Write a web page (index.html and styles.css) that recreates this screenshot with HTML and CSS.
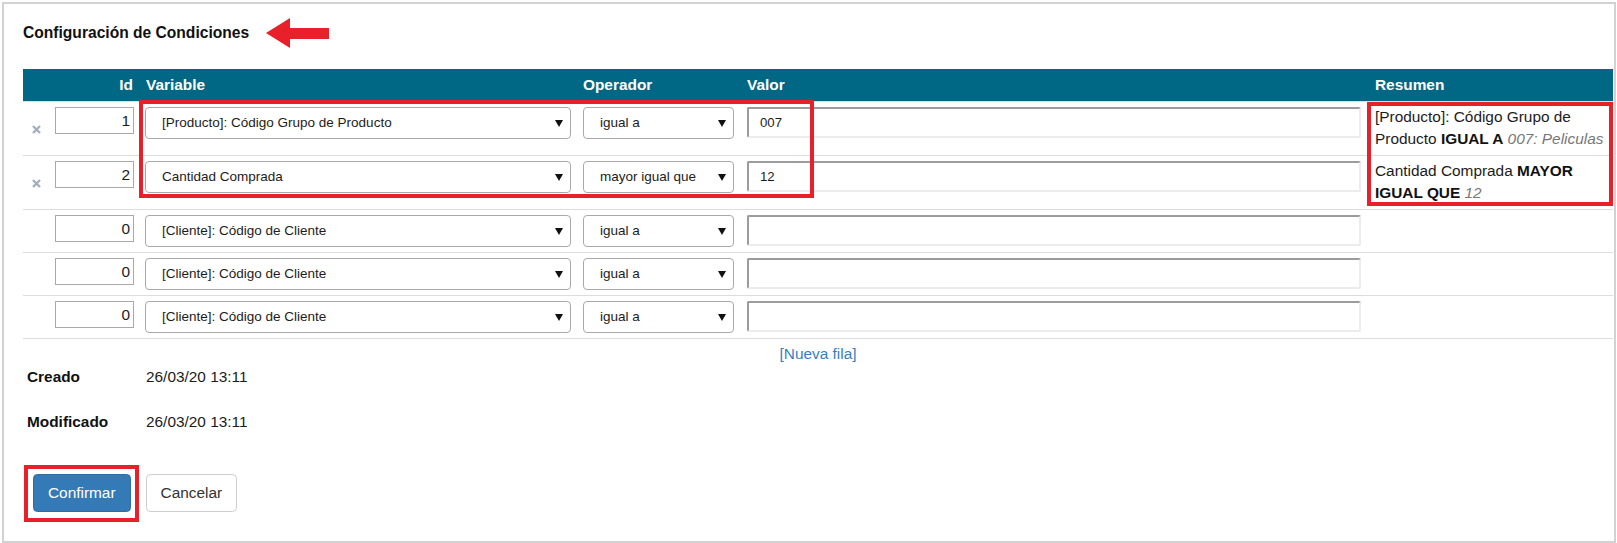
FILE: index.html
```html
<!DOCTYPE html>
<html lang="es">
<head>
<meta charset="utf-8">
<title>Configuración de Condiciones</title>
<link rel="stylesheet" href="styles.css">
</head>
<body>
<div class="frame">
  <h2 class="title">Configuración de Condiciones</h2>

  <table class="grid">
    <colgroup>
      <col class="c-del"><col class="c-id"><col class="c-var"><col class="c-op"><col class="c-val"><col class="c-res">
    </colgroup>
    <thead>
      <tr>
        <th class="del"></th>
        <th class="id">Id</th>
        <th class="var">Variable</th>
        <th class="op">Operador</th>
        <th class="val">Valor</th>
        <th class="res">Resumen</th>
      </tr>
    </thead>
    <tbody>
      <tr>
        <td class="del"><svg class="x" viewBox="0 0 9 9" width="9" height="9"><path d="M1 1L8 8M8 1L1 8"/></svg></td>
        <td class="id"><input class="idin" value="1"></td>
        <td class="var"><div class="sel"><span>[Producto]: Código Grupo de Producto</span><svg class="caret" viewBox="0 0 8 7" width="8" height="7"><polygon points="0,0 8,0 4,7"/></svg></div></td>
        <td class="op"><div class="sel"><span>igual a</span><svg class="caret" viewBox="0 0 8 7" width="8" height="7"><polygon points="0,0 8,0 4,7"/></svg></div></td>
        <td class="val"><input class="valin" value="007"></td>
        <td class="res">[Producto]: Código Grupo de Producto <b>IGUAL A</b> <i>007: Peliculas</i></td>
      </tr>
      <tr>
        <td class="del"><svg class="x" viewBox="0 0 9 9" width="9" height="9"><path d="M1 1L8 8M8 1L1 8"/></svg></td>
        <td class="id"><input class="idin" value="2"></td>
        <td class="var"><div class="sel"><span>Cantidad Comprada</span><svg class="caret" viewBox="0 0 8 7" width="8" height="7"><polygon points="0,0 8,0 4,7"/></svg></div></td>
        <td class="op"><div class="sel"><span>mayor igual que</span><svg class="caret" viewBox="0 0 8 7" width="8" height="7"><polygon points="0,0 8,0 4,7"/></svg></div></td>
        <td class="val"><input class="valin" value="12"></td>
        <td class="res">Cantidad Comprada <b>MAYOR IGUAL QUE</b> <i>12</i></td>
      </tr>
      <tr>
        <td class="del"></td>
        <td class="id"><input class="idin" value="0"></td>
        <td class="var"><div class="sel"><span>[Cliente]: Código de Cliente</span><svg class="caret" viewBox="0 0 8 7" width="8" height="7"><polygon points="0,0 8,0 4,7"/></svg></div></td>
        <td class="op"><div class="sel"><span>igual a</span><svg class="caret" viewBox="0 0 8 7" width="8" height="7"><polygon points="0,0 8,0 4,7"/></svg></div></td>
        <td class="val"><input class="valin" value=""></td>
        <td class="res"></td>
      </tr>
      <tr>
        <td class="del"></td>
        <td class="id"><input class="idin" value="0"></td>
        <td class="var"><div class="sel"><span>[Cliente]: Código de Cliente</span><svg class="caret" viewBox="0 0 8 7" width="8" height="7"><polygon points="0,0 8,0 4,7"/></svg></div></td>
        <td class="op"><div class="sel"><span>igual a</span><svg class="caret" viewBox="0 0 8 7" width="8" height="7"><polygon points="0,0 8,0 4,7"/></svg></div></td>
        <td class="val"><input class="valin" value=""></td>
        <td class="res"></td>
      </tr>
      <tr>
        <td class="del"></td>
        <td class="id"><input class="idin" value="0"></td>
        <td class="var"><div class="sel"><span>[Cliente]: Código de Cliente</span><svg class="caret" viewBox="0 0 8 7" width="8" height="7"><polygon points="0,0 8,0 4,7"/></svg></div></td>
        <td class="op"><div class="sel"><span>igual a</span><svg class="caret" viewBox="0 0 8 7" width="8" height="7"><polygon points="0,0 8,0 4,7"/></svg></div></td>
        <td class="val"><input class="valin" value=""></td>
        <td class="res"></td>
      </tr>
    </tbody>
    <tfoot>
      <tr><td colspan="6" class="foot"><a class="newrow" href="#">[Nueva fila]</a></td></tr>
    </tfoot>
  </table>

  <div class="meta">
    <div class="lbl">Creado</div><div class="v">26/03/20 13:11</div>
    <div class="lbl">Modificado</div><div class="v">26/03/20 13:11</div>
  </div>

  <div class="actions">
    <button class="btn btn-primary">Confirmar</button>
    <button class="btn btn-default">Cancelar</button>
  </div>

  <svg class="arrow" viewBox="0 0 63 30" width="63" height="30"><polygon points="0,15 24,0 24,10 63,10 63,21 24,21 24,30"/></svg>
  <div class="mark mark-a"></div>
  <div class="mark mark-b"></div>
  <div class="mark mark-c"></div>
</div>
</body>
</html>
```

FILE: styles.css
```css
html, body {
  margin: 0;
  padding: 0;
  background: #ffffff;
}

body {
  font-family: "Liberation Sans", Arial, sans-serif;
  font-size: 15.4px;
  line-height: 22px;
  color: #1c1c1c;
}

.frame {
  position: relative;
  box-sizing: border-box;
  margin: 2px 0 0 2px;
  width: 1614px;
  height: 541px;
  border: 2px solid #d2d2d2;
  padding: 18px 0 0 19px;
}

.title {
  margin: 0 0 25px;
  font-size: 15.6px;
  line-height: 22px;
  font-weight: bold;
  color: #111;
}

.grid {
  width: 1590px;
  table-layout: fixed;
  border-collapse: collapse;
  border-spacing: 0;
}

.c-del { width: 27px; }
.c-id { width: 89px; }
.c-var { width: 438px; }
.c-op { width: 163px; }
.c-val { width: 627px; }
.c-res { width: 246px; }

.grid th {
  background: #006885;
  color: #ffffff;
  font-weight: bold;
  text-align: left;
  padding: 5px 6px;
  line-height: 22px;
}

.grid th.id { text-align: right; padding-right: 6px; }

.grid td {
  border-top: 1px solid #dddddd;
  padding: 5px 6px;
  vertical-align: top;
}

.grid th.del, .grid td.del { padding: 0; text-align: center; vertical-align: middle; }
.grid th.var, .grid td.var { padding-left: 6px; padding-right: 6px; }
.grid th.var { padding-left: 7px; }
.grid td.id { padding-left: 5px; padding-right: 5px; }
.grid th.val, .grid td.val { padding-left: 7px; padding-right: 6px; }
.grid th.res, .grid td.res { padding-left: 8px; padding-right: 4px; }

.grid td.res {
  padding-top: 4px;
  padding-bottom: 5px;
  line-height: 22px;
  color: #1c1c1c;
}

.grid td.res b { font-weight: bold; color: #111; }
.grid td.res i { font-style: italic; color: #777777; }

.x {
  display: block;
  margin: 0 auto;
  position: relative;
  top: 1px;
  left: 0;
}
.x path {
  stroke: #a3acc1;
  stroke-width: 2.3;
  fill: none;
}

.idin {
  display: block;
  box-sizing: border-box;
  width: 79px;
  height: 27px;
  margin: 0;
  border: 1px solid #a9a9a9;
  border-radius: 0;
  padding: 0 3px;
  font-family: "Liberation Sans", Arial, sans-serif;
  font-size: 15.4px;
  color: #1c1c1c;
  text-align: right;
  background: #fff;
  outline: none;
}

.sel {
  display: flex;
  align-items: center;
  justify-content: space-between;
  box-sizing: border-box;
  width: 100%;
  height: 32px;
  border: 1px solid #a9a9a9;
  border-radius: 4px;
  padding: 0 7px 0 16px;
  font-size: 13.5px;
  color: #1c1c1c;
  background: #fff;
  white-space: nowrap;
  overflow: hidden;
}

.caret {
  flex: none;
  display: block;
}
.caret polygon { fill: #111; }

.valin {
  display: block;
  box-sizing: border-box;
  width: 100%;
  height: 31px;
  margin: 0;
  border-style: solid;
  border-width: 2px;
  border-color: #9c9c9c #ececec #ececec #9c9c9c;
  border-radius: 2px;
  padding: 0 11px;
  font-family: "Liberation Sans", Arial, sans-serif;
  font-size: 13.2px;
  color: #1c1c1c;
  background: #fff;
  outline: none;
}

.grid td.foot {
  text-align: center;
  padding: 4px 0 0;
  line-height: 22px;
}

.newrow {
  color: #3581c1;
  text-decoration: none;
}

.meta {
  display: grid;
  grid-template-columns: 119px auto;
  row-gap: 23px;
  margin-top: 1px;
  padding-left: 4px;
  line-height: 22px;
}

.meta .lbl { font-weight: bold; color: #111; }
.meta .v { color: #1c1c1c; }

.actions {
  display: flex;
  gap: 15px;
  margin-top: 41px;
  padding-left: 10px;
}

.btn {
  box-sizing: border-box;
  height: 38px;
  margin: 0;
  padding: 0 14px;
  border: 1px solid transparent;
  border-radius: 4.4px;
  font-family: "Liberation Sans", Arial, sans-serif;
  font-size: 15.4px;
  line-height: 36px;
  cursor: pointer;
}

.btn-primary {
  background: #337ab7;
  border-color: #2e6da4;
  color: #ffffff;
}

.btn-default {
  background: #ffffff;
  border-color: #cccccc;
  color: #333333;
}

.arrow {
  position: absolute;
  left: 262px;
  top: 14px;
}
.arrow polygon { fill: #e8202a; }

.mark {
  position: absolute;
  box-sizing: border-box;
  border: 4px solid #e8202a;
  pointer-events: none;
}

.mark-a { left: 135px; top: 96px; width: 675px; height: 98px; }
.mark-b { left: 1363px; top: 98px; width: 246px; height: 104px; }
.mark-c { left: 20px; top: 461px; width: 115px; height: 57px; }
```
